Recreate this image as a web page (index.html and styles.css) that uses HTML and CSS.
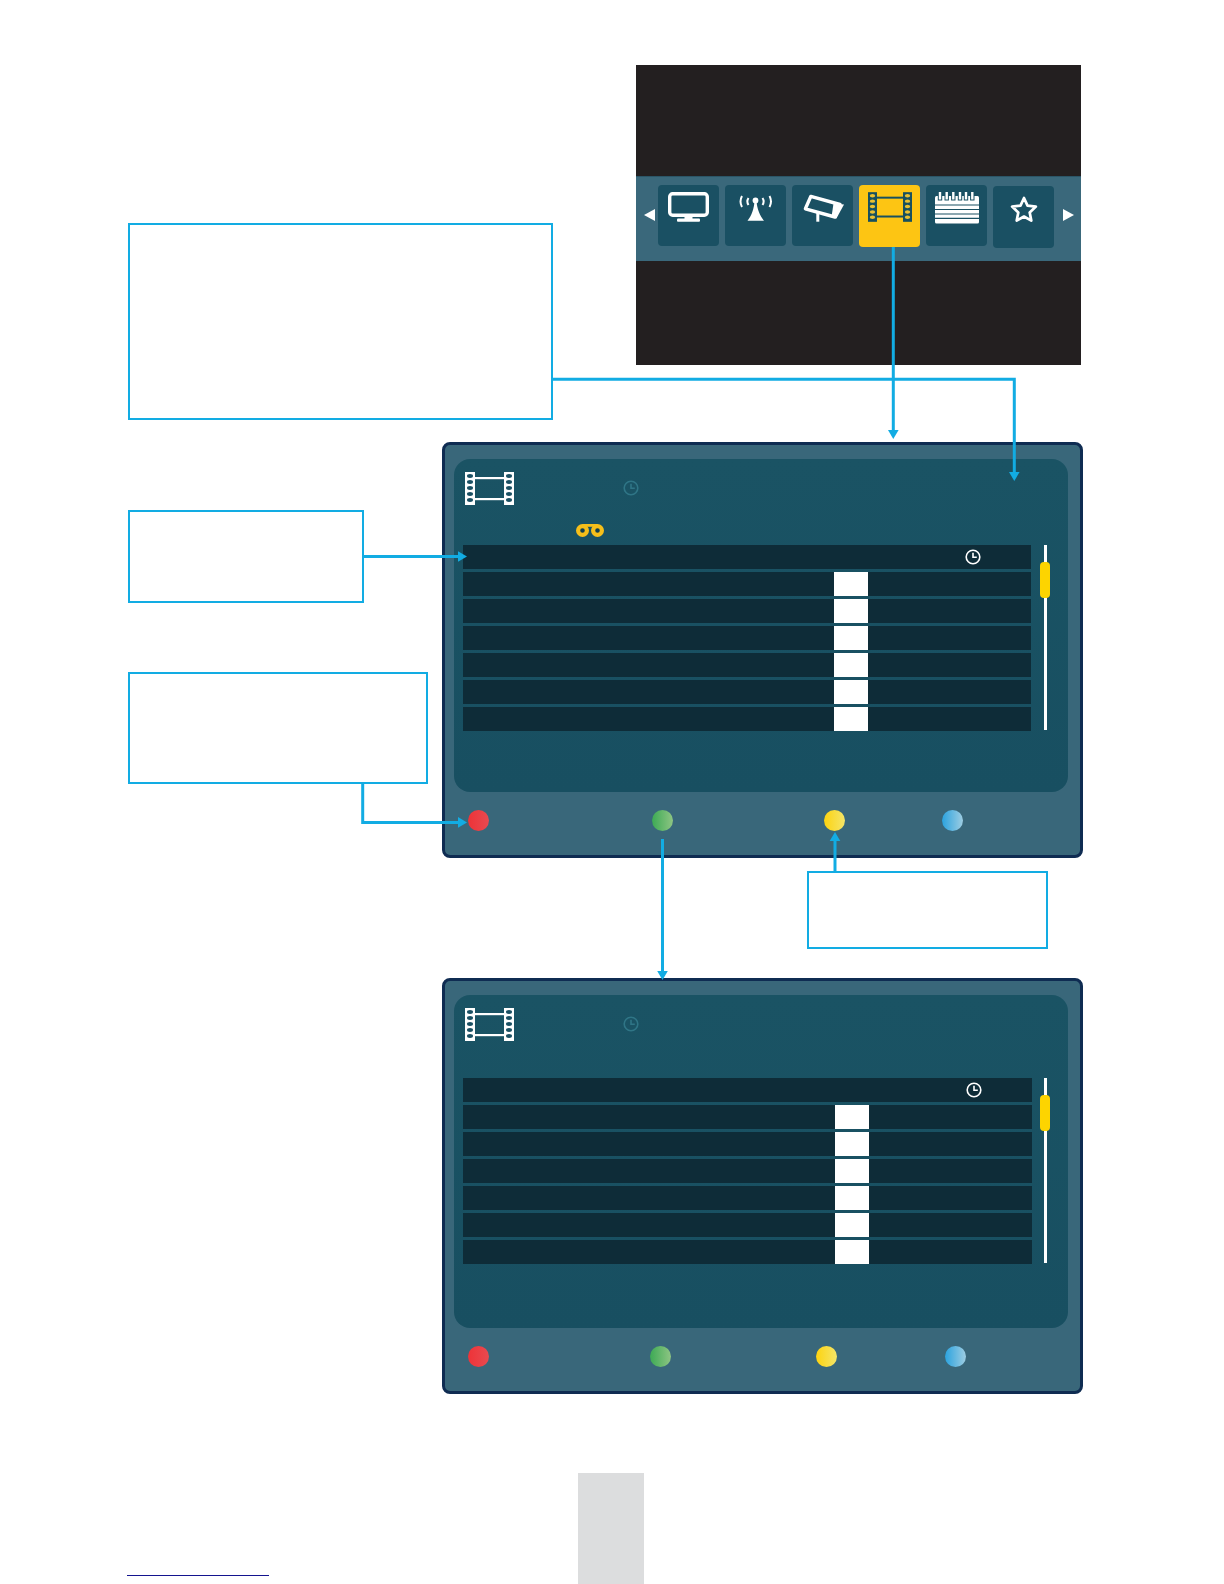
FILE: index.html
```html
<!DOCTYPE html>
<html>
<head>
    <title>Recordings menu diagram</title>
    <link rel="stylesheet" href="styles.css">
</head>
<body>

<svg class="defs">
    <symbol id="film" viewBox="0 0 49 33">
        <rect x="0" y="0" width="10" height="33"/>
        <rect x="39" y="0" width="10" height="33"/>
        <rect x="10" y="5" width="29" height="2.2"/>
        <rect x="10" y="26" width="29" height="2.2"/>
        <g fill="var(--hole)">
            <ellipse cx="5" cy="4" rx="3" ry="1.9"/>
            <ellipse cx="5" cy="10" rx="3" ry="1.9"/>
            <ellipse cx="5" cy="16" rx="3" ry="1.9"/>
            <ellipse cx="5" cy="22" rx="3" ry="1.9"/>
            <ellipse cx="5" cy="28" rx="3" ry="1.9"/>
            <ellipse cx="44" cy="4" rx="3" ry="1.9"/>
            <ellipse cx="44" cy="10" rx="3" ry="1.9"/>
            <ellipse cx="44" cy="16" rx="3" ry="1.9"/>
            <ellipse cx="44" cy="22" rx="3" ry="1.9"/>
            <ellipse cx="44" cy="28" rx="3" ry="1.9"/>
        </g>
    </symbol>
    <symbol id="clock" viewBox="0 0 16 16">
        <circle cx="8" cy="8" r="6.8" fill="none" stroke="currentColor" stroke-width="1.6"/>
        <path d="M8 3.8V8.3H11.8" fill="none" stroke="currentColor" stroke-width="1.6"/>
    </symbol>
</svg>

<div class="canvas">

    <!-- menu screen -->
    <div class="screen">
        <div class="band">
            <span class="arrow-left"></span>
            <div class="tile">
                <svg class="icon-tv" viewBox="0 0 41 30">
                    <rect x="1.7" y="1.7" width="37.6" height="21.6" rx="3" fill="none" stroke="#fff" stroke-width="3.4"/>
                    <rect x="16.5" y="24.5" width="8" height="2.5" fill="#fff"/>
                    <rect x="9" y="26.5" width="23" height="3.2" rx="1" fill="#fff"/>
                </svg>
            </div>
            <div class="tile">
                <svg class="icon-antenna" viewBox="0 0 34 26">
                    <path d="M15.5 6C15 14 12.5 21 8.5 25.7H25C21 21 18 14 17.5 6Z" fill="#fff"/>
                    <circle cx="16.5" cy="5.5" r="2.9" fill="#fff"/>
                    <path d="M3 1Q0 6.5 3 12M9.5 3Q7.2 6.5 9.5 10M23.5 3Q25.8 6.5 23.5 10M30.5 1Q33.5 6.5 30.5 12" fill="none" stroke="#fff" stroke-width="2"/>
                </svg>
            </div>
            <div class="tile">
                <svg class="icon-camera" viewBox="0 0 42 31">
                    <polygon points="8.8,3.4 38,11.5 33,24 3.4,15.8" fill="none" stroke="#fff" stroke-width="3.4" stroke-linejoin="round"/>
                    <polygon points="31.5,10.4 42,11.4 34.4,25.5 29.5,24" fill="#fff"/>
                    <path d="M15.8 20V28.7" fill="none" stroke="#fff" stroke-width="3"/>
                </svg>
            </div>
            <div class="tile tile-on">
                <svg class="icon-film"><use href="#film"/></svg>
            </div>
            <div class="tile">
                <svg class="icon-notes" viewBox="0 0 44 32">
                    <rect x="0" y="4" width="44" height="27.4" rx="1.5" fill="#fff"/>
                    <path d="M5 4V8.5M11.7 4V8.5M18.3 4V8.5M25 4V8.5M31 4V8.5M37.3 4V8.5" stroke="#1a5063" stroke-width="4.4"/>
                    <path d="M5 0V7.5M11.7 0V7.5M18.3 0V7.5M25 0V7.5M31 0V7.5M37.3 0V7.5" stroke="#fff" stroke-width="2.4"/>
                    <path d="M0 13H44M0 17.5H44M0 22H44M0 26.4H44" stroke="#1a5063" stroke-width="1.2"/>
                </svg>
            </div>
            <div class="tile tile-low">
                <svg class="icon-star" viewBox="0 0 28 28">
                    <polygon points="14,2 17.5,9.6 25.9,10.6 19.7,16.4 21.3,24.6 14,20.5 6.7,24.6 8.3,16.4 2.1,10.6 10.5,9.6" fill="none" stroke="#fff" stroke-width="2.7" stroke-linejoin="round"/>
                </svg>
            </div>
            <span class="arrow-right"></span>
        </div>
    </div>

    <!-- callout boxes -->
    <div class="callout callout-1"></div>
    <div class="callout callout-2"></div>
    <div class="callout callout-3"></div>
    <div class="callout callout-4"></div>

    <!-- recordings list -->
    <div class="panel panel-a">
        <div class="inner">
            <div class="head">
                <div class="head-top">
                    <svg class="film"><use href="#film"/></svg>
                    <svg class="clock-dim"><use href="#clock"/></svg>
                </div>
                <svg class="tape" viewBox="0 0 28 13">
                    <rect x="6.5" y="0" width="15" height="2.8" fill="#f6bf1a"/>
                    <circle cx="6.5" cy="6.5" r="4.4" fill="#123f4e" stroke="#f6bf1a" stroke-width="4.2"/>
                    <circle cx="21.5" cy="6.5" r="4.4" fill="#123f4e" stroke="#f6bf1a" stroke-width="4.2"/>
                </svg>
            </div>
            <div class="body">
                <div class="list">
                    <div class="row row-head"><svg class="clock"><use href="#clock"/></svg></div>
                    <div class="row"><span class="cell"></span></div>
                    <div class="row"><span class="cell"></span></div>
                    <div class="row"><span class="cell"></span></div>
                    <div class="row"><span class="cell"></span></div>
                    <div class="row"><span class="cell"></span></div>
                    <div class="row"><span class="cell"></span></div>
                </div>
                <div class="scroll"><span class="thumb"></span></div>
            </div>
        </div>
        <div class="keys">
            <span class="dot dot-red"></span>
            <span class="dot dot-green"></span>
            <span class="dot dot-yellow"></span>
            <span class="dot dot-blue"></span>
        </div>
    </div>

    <!-- sorted list -->
    <div class="panel panel-b">
        <div class="inner">
            <div class="head">
                <div class="head-top">
                    <svg class="film"><use href="#film"/></svg>
                    <svg class="clock-dim"><use href="#clock"/></svg>
                </div>
            </div>
            <div class="body">
                <div class="list">
                    <div class="row row-head"><svg class="clock"><use href="#clock"/></svg></div>
                    <div class="row"><span class="cell"></span></div>
                    <div class="row"><span class="cell"></span></div>
                    <div class="row"><span class="cell"></span></div>
                    <div class="row"><span class="cell"></span></div>
                    <div class="row"><span class="cell"></span></div>
                    <div class="row"><span class="cell"></span></div>
                </div>
                <div class="scroll"><span class="thumb"></span></div>
            </div>
        </div>
        <div class="keys">
            <span class="dot dot-red"></span>
            <span class="dot dot-green"></span>
            <span class="dot dot-yellow"></span>
            <span class="dot dot-blue"></span>
        </div>
    </div>

    <!-- connector arrows -->
    <svg class="wires" viewBox="0 0 1224 1584">
        <g fill="none" stroke="#12ace3" stroke-width="3">
            <path d="M552 379.3H1014.3V473"/>
            <path d="M893.3 247V431"/>
            <path d="M363 556.5H459"/>
            <path d="M362.7 783V822.4H459"/>
            <path d="M662.5 839V972"/>
            <path d="M835 871V840"/>
        </g>
        <g fill="#12ace3">
            <polygon points="1009,472 1019.6,472 1014.3,481"/>
            <polygon points="888,430 898.6,430 893.3,439"/>
            <polygon points="458,551.2 467,556.5 458,561.8"/>
            <polygon points="458,817 467,822.4 458,827.8"/>
            <polygon points="657.2,971 667.8,971 662.5,980"/>
            <polygon points="829.7,841 840.3,841 835,832"/>
        </g>
    </svg>

    <div class="rule"></div>
    <div class="tab"></div>
</div>

</body>
</html>
```

FILE: styles.css
```css
html, body {
    margin: 0;
    height: 100%;
    background: #fff;
    overflow: hidden;
}
.defs {
    display: none;
}
.canvas {
    position: relative;
    width: 1224px;
    height: 1584px;
    overflow: hidden;
}
svg {
    display: block;
}

/* menu screen */
.screen {
    position: absolute;
    left: 636px;
    top: 65px;
    width: 445px;
    height: 300px;
    padding-top: 111px;
    box-sizing: border-box;
    background: #231f20;
}
.band {
    display: flex;
    align-items: flex-start;
    gap: 6px;
    height: 85px;
    padding: 8px 0 0 8px;
    box-sizing: border-box;
    background: #3a687b;
    border-top: 1px solid #2b5567;
}
.tile {
    width: 61px;
    height: 61px;
    flex: none;
    border-radius: 4px;
    background: #1a5063;
}
.tile svg {
    margin: 0 auto;
}
.tile-on {
    height: 62px;
    background: #fdc513;
    --hole: #e9c032;
}
.tile-low {
    height: 62px;
    margin-top: 1px;
}
.arrow-left, .arrow-right {
    width: 0;
    height: 0;
    flex: none;
    margin-top: 24px;
    border-top: 6px solid transparent;
    border-bottom: 6px solid transparent;
}
.arrow-left {
    margin-right: -3px;
    border-right: 11px solid #fff;
}
.arrow-right {
    margin-left: 3px;
    border-left: 11px solid #fff;
}
.icon-tv {
    width: 41px;
    height: 30px;
    padding-top: 7px;
}
.icon-antenna {
    width: 34px;
    height: 26px;
    padding-top: 10px;
}
.icon-camera {
    width: 42px;
    height: 31px;
    padding-top: 8px;
}
.icon-film {
    width: 44px;
    height: 30px;
    padding-top: 7px;
    fill: #17505f;
}
.icon-notes {
    width: 44px;
    height: 32px;
    padding-top: 7px;
}
.icon-star {
    width: 28px;
    height: 28px;
    padding-top: 10px;
}

/* callouts */
.callout {
    position: absolute;
    box-sizing: border-box;
    border: 2px solid #12ace3;
}
.callout-1 {
    left: 128px;
    top: 223px;
    width: 425px;
    height: 197px;
}
.callout-2 {
    left: 128px;
    top: 510px;
    width: 236px;
    height: 93px;
}
.callout-3 {
    left: 128px;
    top: 672px;
    width: 300px;
    height: 112px;
}
.callout-4 {
    left: 807px;
    top: 871px;
    width: 241px;
    height: 78px;
}

/* list panels */
.panel {
    position: absolute;
    left: 442px;
    width: 641px;
    height: 416px;
    box-sizing: border-box;
    padding: 14px 12px 0 9px;
    border: 3px solid #0f2c52;
    border-radius: 8px;
    background: #39677a;
    --hole: #1a5063;
}
.panel-a {
    top: 442px;
}
.panel-b {
    top: 978px;
}
.inner {
    height: 333px;
    padding: 13px 0 0 9px;
    box-sizing: border-box;
    border-radius: 16px;
    background: linear-gradient(#1a5364, #184f61);
}
.head {
    height: 73px;
}
.panel-b .head {
    height: 70px;
}
.head-top {
    display: flex;
    align-items: center;
    height: 33px;
    padding-left: 2px;
}
.film {
    width: 49px;
    height: 33px;
    fill: #fff;
}
.clock-dim {
    width: 16px;
    height: 16px;
    margin: -2px 0 0 109px;
    color: #2f7586;
}
.tape {
    width: 28px;
    height: 13px;
    margin: 19px 0 0 113px;
}
.body {
    display: flex;
    align-items: flex-start;
}
.list {
    display: flex;
    flex-direction: column;
    gap: 3px;
    width: 568px;
}
.panel-b .list {
    width: 569px;
}
.row {
    display: flex;
    height: 24px;
    background: #0e2c38;
}
.row-head {
    align-items: center;
}
.clock {
    width: 16px;
    height: 16px;
    margin-left: 502px;
    color: #fff;
}
.panel-b .clock {
    margin-left: 503px;
}
.cell {
    width: 34px;
    margin-left: 371px;
    background: #fff;
}
.panel-b .cell {
    margin-left: 372px;
}
.scroll {
    position: relative;
    width: 3px;
    height: 185px;
    margin-left: 13px;
    background: #fff;
}
.panel-b .scroll {
    margin-left: 12px;
}
.thumb {
    position: absolute;
    left: -4px;
    top: 17px;
    width: 10px;
    height: 36px;
    border-radius: 4px;
    background: #fdd400;
}

/* colour keys */
.keys {
    display: flex;
    padding: 18px 0 0 14px;
}
.dot {
    width: 21px;
    height: 21px;
    flex: none;
    border-radius: 50%;
}
.dot-red {
    background: linear-gradient(to right, #ee3338, #e84a50);
}
.dot-green {
    background: linear-gradient(to right, #3daa55, #8ec583);
}
.dot-yellow {
    background: linear-gradient(to right, #fdd30f, #f4e569);
}
.dot-blue {
    background: linear-gradient(to right, #2ba3df, #9ecde2);
}
.panel-a .dot-green {
    margin-left: 163px;
}
.panel-a .dot-yellow {
    margin-left: 151px;
}
.panel-a .dot-blue {
    margin-left: 97px;
}
.panel-b .dot-green {
    margin-left: 161px;
}
.panel-b .dot-yellow {
    margin-left: 145px;
}
.panel-b .dot-blue {
    margin-left: 108px;
}

/* connector overlay */
.wires {
    position: absolute;
    left: 0;
    top: 0;
    width: 1224px;
    height: 1584px;
    pointer-events: none;
}

/* page footer bits */
.rule {
    position: absolute;
    left: 127px;
    top: 1575px;
    width: 142px;
    height: 1px;
    background: #14148f;
}
.tab {
    position: absolute;
    left: 578px;
    top: 1473px;
    width: 66px;
    height: 111px;
    background: #dcddde;
}
```
